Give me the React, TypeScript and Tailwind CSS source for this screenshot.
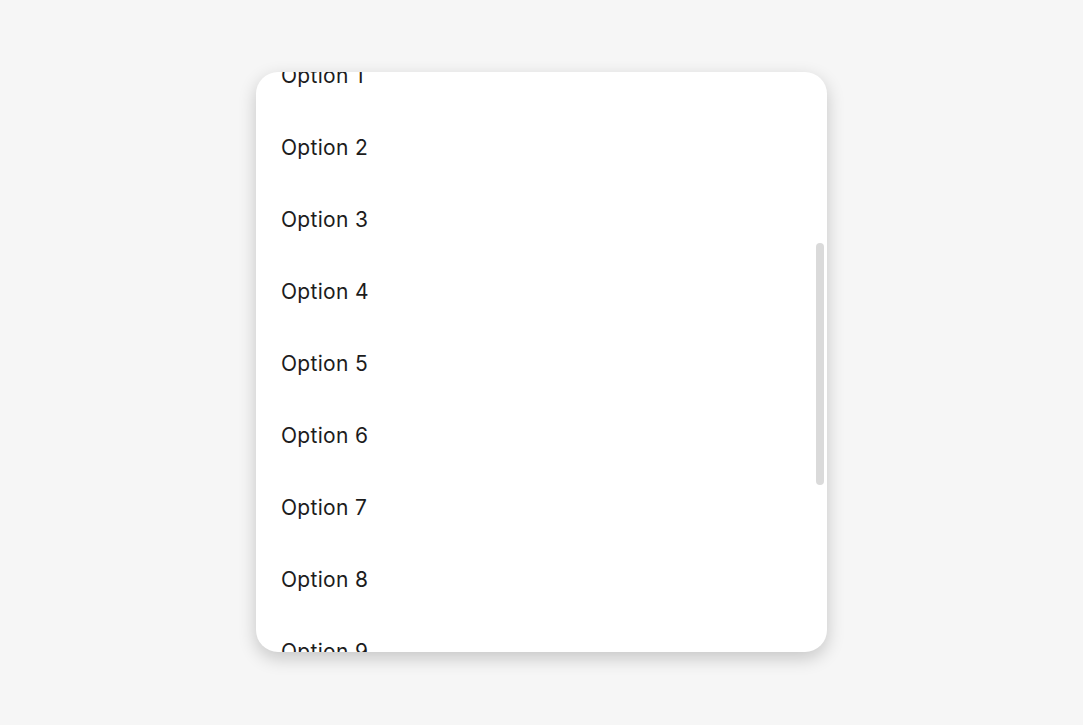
import React, { useEffect, useRef } from "react";

const options = Array.from({ length: 16 }, (_, i) => `Option ${i + 1}`);

export default function App() {
    const listRef = useRef<HTMLDivElement>(null);

    useEffect(() => {
        if (listRef.current) listRef.current.scrollTop = 32;
    }, []);

    return (
        <div className="min-h-screen w-full bg-[#f6f6f6] flex justify-center pt-[72px] font-['Inter',sans-serif]">
            <div className="relative w-[571px] h-[580px] bg-white rounded-[22px] shadow-[0_6px_18px_rgba(0,0,0,0.2)] overflow-hidden">
                <div
                    ref={listRef}
                    className="h-full overflow-y-auto [scrollbar-width:none] [&::-webkit-scrollbar]:hidden"
                >
                    {options.map((o) => (
                        <div key={o} className="h-[72px] flex items-center px-[25px] text-[21px] text-[#1c1c1c] tracking-[0.3px]">
                            {o}
                        </div>
                    ))}
                </div>
                {/* scrollbar thumb */}
                <div className="absolute right-[3px] top-[171px] w-[8px] h-[242px] rounded-full bg-[#dadada]" />
            </div>
        </div>
    );
}
